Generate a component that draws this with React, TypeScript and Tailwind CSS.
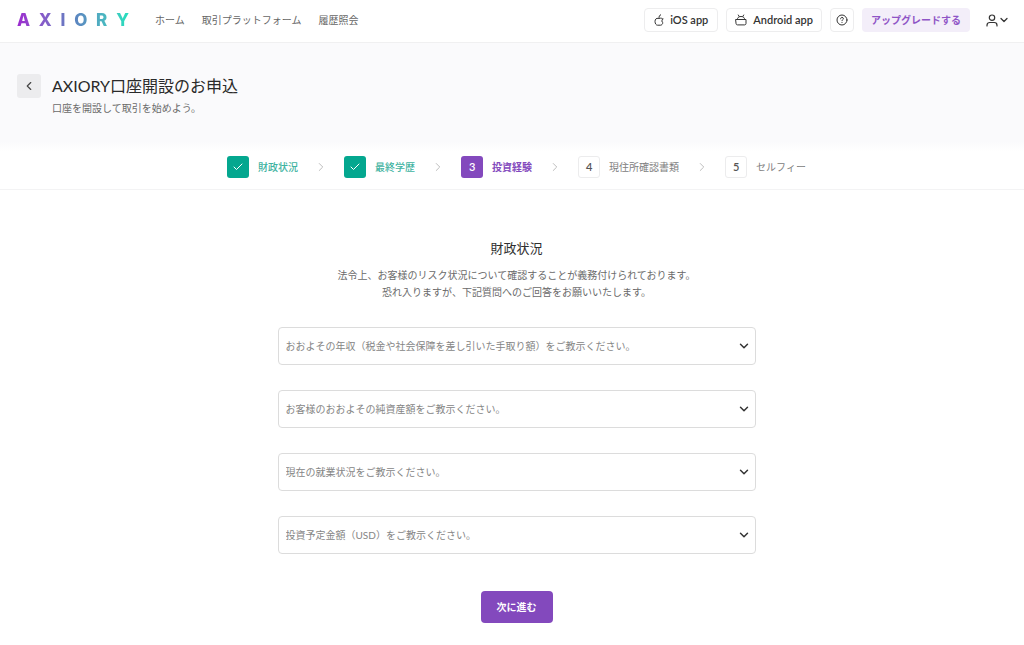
import { Check, ChevronDown, ChevronLeft, ChevronRight } from 'lucide-react'

const navLinks = ['ホーム', '取引プラットフォーム', '履歴照会']

const steps = [
    { label: '財政状況', state: 'done' },
    { label: '最終学歴', state: 'done' },
    { label: '投資経験', state: 'current' },
    { label: '現住所確認書類', state: 'todo' },
    { label: 'セルフィー', state: 'todo' },
]

const questions = [
    { id: 'income', label: 'おおよその年収（税金や社会保障を差し引いた手取り額）をご教示ください。' },
    { id: 'assets', label: 'お客様のおおよその純資産額をご教示ください。' },
    { id: 'employment', label: '現在の就業状況をご教示ください。' },
    { id: 'deposit', label: '投資予定金額（USD）をご教示ください。' },
]

const boxStyles: Record<string, string> = {
    done: 'bg-[#04a78f] text-white',
    current: 'bg-[#8349bd] text-white',
    todo: 'border border-[#ececed] bg-white text-[#555555]',
}

const labelStyles: Record<string, string> = {
    done: 'text-[#3fb3a1] font-medium',
    current: 'text-[#8349bd] font-bold',
    todo: 'text-[#808080]',
}

function AppleIcon() {
    return (
        <svg width="10" height="12" viewBox="0 0 10 12" fill="none" stroke="currentColor" strokeLinecap="round" strokeLinejoin="round" aria-hidden="true">
            <path d="M8.700 5C7.900 4 6.700 4 5.800 4.400 5.300 4.600 4.700 4.600 4.200 4.400 2.500 3.900 1 5.200 1 7.400c0 2.200 1.200 3.800 2.500 3.800h3c1.200 0 2.100-1.200 2.400-2.500C7.600 8.100 7.500 6 8.700 5z" />
            <path d="M5 4.200C4.900 2.500 5.400 1.200 6.600.8" />
        </svg>
    )
}

function AndroidIcon() {
    return (
        <svg width="12" height="12" viewBox="0 0 12 12" fill="none" stroke="currentColor" strokeLinecap="round" strokeLinejoin="round" aria-hidden="true">
            <path d="M2.300 5.500C2.300 3.500 4 2.500 6 2.500s3.700 1 3.700 3" />
            <path d="M3.300 1l.9 1.500M8.700 1l-.9 1.500" />
            <path d="M1 5.500h10v4c0 .8-.6 1.400-1.400 1.400H2.400C1.600 10.900 1 10.300 1 9.500z" />
        </svg>
    )
}

function HelpIcon() {
    return (
        <svg width="12" height="12" viewBox="0 0 12 12" fill="none" stroke="currentColor" strokeLinecap="round" aria-hidden="true">
            <circle cx="6" cy="6" r="5" />
            <path d="M4.600 4.800c0-.9.600-1.400 1.400-1.400s1.400.5 1.400 1.300c0 .9-1.400 1-1.400 2" />
            <path d="M6 8.500v.1" />
        </svg>
    )
}

function UserIcon() {
    return (
        <svg width="12" height="13" viewBox="0 0 12 13" fill="none" stroke="currentColor" strokeWidth="1.200" strokeLinecap="round" aria-hidden="true">
            <circle cx="6" cy="3.700" r="2.700" />
            <path d="M1 12v-.8c0-1.700 1.200-2.700 2.800-2.700h4.400c1.600 0 2.800 1 2.800 2.700v.8" />
        </svg>
    )
}

function Header() {
    return (
        <header className="flex items-center border-b border-[#f0f0f1] px-[17px] pt-2 pb-2.5">
            <a
                href="#"
                aria-label="AXIORY"
                className="flex w-28 justify-between bg-linear-to-r from-[#9c27cf] via-[#5c80c0] to-[#1fe0bd] bg-clip-text font-[Inter,sans-serif] text-[17px] leading-6 font-extrabold text-transparent"
            >
                {'AXIORY'.split('').map((letter, index) => (
                    <span key={index}>{letter}</span>
                ))}
            </a>
            <nav className="ml-[26px] flex gap-[17px] text-[#666666]">
                {navLinks.map((link) => (
                    <a key={link} href="#">
                        {link}
                    </a>
                ))}
            </nav>
            <div className="ml-auto flex items-center text-[#333333]">
                <div className="flex gap-2 text-[11px] font-semibold">
                    <button className="flex h-6 items-center gap-1.5 rounded border border-[#ededee] px-[9px]">
                        <AppleIcon />
                        iOS app
                    </button>
                    <button className="flex h-6 items-center gap-1.5 rounded border border-[#ededee] px-2">
                        <AndroidIcon />
                        Android app
                    </button>
                    <button aria-label="ヘルプ" className="flex size-6 items-center justify-center rounded border border-[#ededee]">
                        <HelpIcon />
                    </button>
                </div>
                <button className="ml-2 h-6 rounded bg-[#f3eef9] px-[9px] font-bold text-[#8f55c6]">
                    アップグレードする
                </button>
                <button aria-label="アカウント" className="-mr-[3px] ml-4 flex items-center">
                    <UserIcon />
                    <ChevronDown size={12} strokeWidth={2.5} />
                </button>
            </div>
        </header>
    )
}

function Stepper() {
    return (
        <ol className="flex items-center justify-center border-b border-[#f3f3f4] bg-linear-to-b from-[#fafafc] to-white to-20% pt-3.5 pb-[11px] pl-[9px]">
            {steps.map((step, index) => (
                <li key={step.label} className="flex items-center" aria-current={step.state === 'current' ? 'step' : undefined}>
                    <span className={`flex size-[22px] items-center justify-center rounded-[3px] text-[11px] font-semibold ${boxStyles[step.state]}`}>
                        {step.state === 'done' ? <Check size={12} strokeWidth={2} /> : index + 1}
                    </span>
                    <span className={`ml-[9px] ${labelStyles[step.state]}`}>{step.label}</span>
                    {index < steps.length - 1 && (
                        <ChevronRight size={14} strokeWidth={1.5} className="mx-4 text-[#b5b5b5]" />
                    )}
                </li>
            ))}
        </ol>
    )
}

export default function App() {
    return (
        <div className="bg-white font-[Lato,'Noto_Sans_CJK_JP',sans-serif] text-[10px] leading-4 text-[#6a6a6a]">
            <Header />
            <section className="flex gap-[11px] bg-[#fafafc] px-[17px] pt-[31px] pb-[26px]">
                <button aria-label="戻る" className="flex size-6 items-center justify-center rounded-[3px] bg-[#ececee] text-[#444444]">
                    <ChevronLeft size={14} strokeWidth={2} />
                </button>
                <div>
                    <h1 className="text-base leading-6 text-[#2a2a2a]">AXIORY口座開設のお申込</h1>
                    <p className="mt-0.5">口座を開設して取引を始めよう。</p>
                </div>
            </section>
            <Stepper />
            <main className="flex flex-col items-center pt-12 pb-[22px] pl-[9px]">
                <h2 className="text-[13px] leading-5 text-[#2f2f2f]">財政状況</h2>
                <p className="mt-[9px] text-center leading-[17px]">
                    法令上、お客様のリスク状況について確認することが義務付けられております。
                    <br />
                    恐れ入りますが、下記質問へのご回答をお願いいたします。
                </p>
                <form className="mt-[26px] flex w-full max-w-[478px] flex-col items-center">
                    <div className="flex w-full flex-col gap-[25px]">
                        {questions.map((question) => (
                            <div key={question.id} className="relative">
                                <select
                                    id={question.id}
                                    aria-label={question.label}
                                    defaultValue=""
                                    className="block h-[38px] w-full appearance-none rounded border border-[#dcdcdc] bg-white pr-6 pl-[7px] text-[#858585]"
                                >
                                    <option value="">{question.label}</option>
                                </select>
                                <ChevronDown
                                    size={14}
                                    strokeWidth={2.5}
                                    className="pointer-events-none absolute top-3 right-[5px] text-[#333333]"
                                />
                            </div>
                        ))}
                    </div>
                    <button type="submit" className="mt-[37px] h-8 rounded bg-[#8349bd] px-4 font-bold text-white">
                        次に進む
                    </button>
                </form>
            </main>
        </div>
    )
}
